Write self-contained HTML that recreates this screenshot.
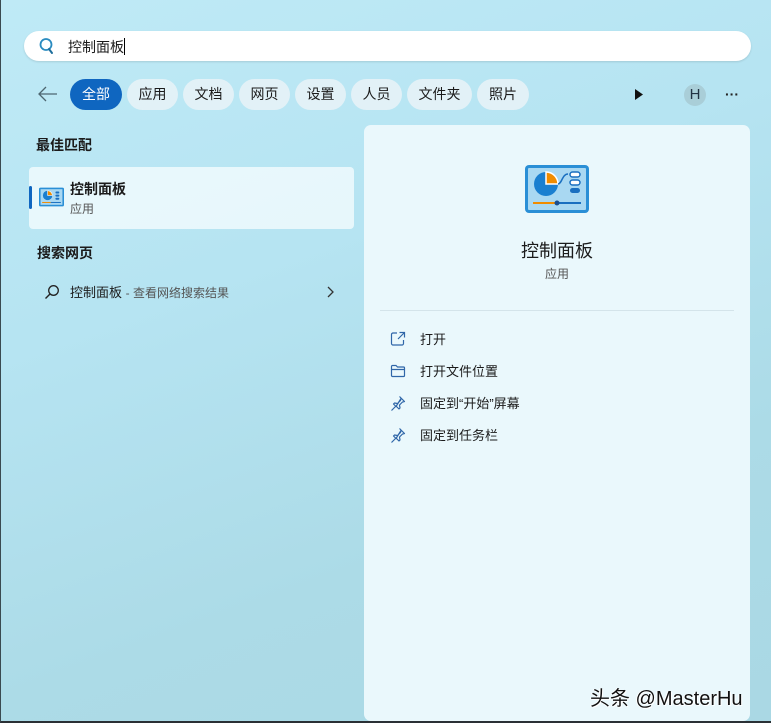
<!DOCTYPE html>
<html><head><meta charset="utf-8"><style>
*{margin:0;padding:0;box-sizing:border-box}
body{width:771px;height:723px;overflow:hidden;font-family:"Liberation Sans","Noto Sans CJK SC",sans-serif;color:#1b1b1b;position:relative;
background:linear-gradient(160deg,#bfeaf6 0%,#b6e4f2 35%,#acdbe7 70%,#aad8e4 100%);}
.frame{position:absolute;left:0;top:0;width:771px;height:723px;border-left:1px solid #3a4a50;border-bottom:2px solid #2a3035;pointer-events:none}
.search{position:absolute;left:24px;top:31px;width:727px;height:30px;background:#fff;border-radius:15px;box-shadow:0 1px 2px rgba(0,0,0,.12)}
.search .t{position:absolute;left:44px;top:6px;font-size:14px}
.search .cur{display:inline-block;width:1px;height:17px;background:#000;vertical-align:-3px}
.pill{position:absolute;top:79px;height:31px;border-radius:16px;background:rgba(236,244,247,.8);font-size:14px;line-height:31px;text-align:center}
.pill.on{background:#0f66c0;color:#fff}
.h{position:absolute;font-size:14px;font-weight:bold}
.card{position:absolute;left:29px;top:167px;width:325px;height:62px;background:rgba(240,250,253,.85);border-radius:4px}
.bar{position:absolute;left:29px;top:186px;width:3px;height:23px;background:#0f66c0;border-radius:2px}
.panel{position:absolute;left:364px;top:125px;width:386px;height:596px;background:#eaf8fc;border-radius:7px}
.act{position:absolute;left:56px;font-size:13px}
.ic{position:absolute;left:26px}
</style></head><body>
<div class="search">
<svg style="position:absolute;left:14px;top:6px" width="18" height="18" viewBox="0 0 18 18"><circle cx="8" cy="7.5" r="5.5" fill="none" stroke="#2a8bc0" stroke-width="1.8"/><path d="M11 12L14 16" stroke="#1e6e9c" stroke-width="2" stroke-linecap="round"/></svg>
<div class="t">控制面板<span class="cur"></span></div>
</div>
<svg style="position:absolute;left:38px;top:86px" width="20" height="16" viewBox="0 0 20 16"><path d="M19 8H2M8 1L1 8l7 7" fill="none" stroke="#4d6670" stroke-width="1.3"/></svg>
<div class="pill on" style="left:70px;width:52px">全部</div>
<div class="pill" style="left:127px;width:51px">应用</div>
<div class="pill" style="left:183px;width:51px">文档</div>
<div class="pill" style="left:239px;width:51px">网页</div>
<div class="pill" style="left:295px;width:51px">设置</div>
<div class="pill" style="left:351px;width:51px">人员</div>
<div class="pill" style="left:407px;width:65px">文件夹</div>
<div class="pill" style="left:477px;width:52px">照片</div>
<svg style="position:absolute;left:634px;top:88px" width="10" height="13"><path d="M1 1L9 6.5 1 12Z" fill="#111"/></svg>
<div style="position:absolute;left:684px;top:84px;width:22px;height:22px;border-radius:11px;background:#a9ced8;font-size:15px;text-align:center;line-height:22px;color:#234">H</div>
<div style="position:absolute;left:725px;top:86px;font-size:14px;font-weight:bold;color:#222">···</div>

<div class="h" style="left:36px;top:135px">最佳匹配</div>
<div class="card"></div><div class="bar"></div>
<svg style="position:absolute;left:39px;top:187px" width="25" height="20" viewBox="0 0 64 48"><rect x="0" y="0" width="64" height="48" rx="4" fill="#2a8fd6"/><rect x="4" y="4" width="56" height="40" fill="#a9d8f2"/><circle cx="22" cy="20" r="12" fill="#1a7fd0"/><path d="M22 8v12h12A12 12 0 0 0 22 8z" fill="#f08c00" stroke="#fff" stroke-width="1.5"/><rect x="42" y="10" width="10" height="5" rx="2.5" fill="#1a6fc0"/><rect x="42" y="18" width="10" height="5" rx="2.5" fill="#1a6fc0"/><rect x="42" y="26" width="10" height="5" rx="2.5" fill="#1a6fc0"/><path d="M8 38h22" stroke="#f08c00" stroke-width="2.5"/><path d="M30 38h26" stroke="#1a6fc0" stroke-width="2.5"/></svg>
<div style="position:absolute;left:70px;top:179px;font-size:14px;font-weight:bold">控制面板</div>
<div style="position:absolute;left:70px;top:200px;font-size:12px;color:#555">应用</div>
<div class="h" style="left:37px;top:243px">搜索网页</div>
<svg style="position:absolute;left:44px;top:284px" width="16" height="16" viewBox="0 0 16 16"><circle cx="9.5" cy="6.5" r="4.8" fill="none" stroke="#222" stroke-width="1.3"/><path d="M6 10L1.5 14.5" stroke="#222" stroke-width="1.4"/></svg>
<div style="position:absolute;left:70px;top:282px;font-size:13px">控制面板 <span style="color:#555;font-size:12px">- 查看网络搜索结果</span></div>
<svg style="position:absolute;left:326px;top:286px" width="8" height="12"><path d="M2 1l5 5-5 5" fill="none" stroke="#333" stroke-width="1.3"/></svg>

<div class="panel">
<svg style="position:absolute;left:161px;top:40px" width="64" height="48" viewBox="0 0 64 48"><rect x="0" y="0" width="64" height="48" rx="4" fill="#2a8fd6"/><rect x="3" y="3" width="58" height="42" rx="1" fill="#a9d8f2"/><circle cx="21" cy="19" r="12" fill="#1a7fd0"/><path d="M21 7v12h12A12 12 0 0 0 21 7z" fill="#f08c00" stroke="#fff" stroke-width="1.5"/><path d="M33 19c4 0 4-10 10-10" fill="none" stroke="#1a6fc0" stroke-width="1.5"/><rect x="45" y="7" width="10" height="5" rx="2.5" fill="#fff" stroke="#1a6fc0" stroke-width="1.5"/><rect x="45" y="15" width="10" height="5" rx="2.5" fill="#fff" stroke="#1a6fc0" stroke-width="1.5"/><rect x="45" y="23" width="10" height="5" rx="2.5" fill="#1a6fc0"/><path d="M8 38h24" stroke="#f08c00" stroke-width="2"/><path d="M32 38h24" stroke="#1a6fc0" stroke-width="2"/><circle cx="32" cy="38" r="2.5" fill="#1a4f90"/></svg>
<div style="position:absolute;left:0;width:386px;top:112px;text-align:center;font-size:18px">控制面板</div>
<div style="position:absolute;left:0;width:386px;top:140px;text-align:center;font-size:12px;color:#555">应用</div>
<div style="position:absolute;left:16px;top:185px;width:354px;height:1px;background:#d4e4ea"></div>
<svg class="ic" style="top:206px" width="16" height="16" viewBox="0 0 16 16"><path d="M7 2H3a1.5 1.5 0 0 0-1.5 1.5v9A1.5 1.5 0 0 0 3 14h9a1.5 1.5 0 0 0 1.5-1.5V9M9.5 1.5H14.5V6.5M14.5 1.5L8 8" fill="none" stroke="#2f66a8" stroke-width="1.2"/></svg>
<div class="act" style="top:204px">打开</div>
<svg class="ic" style="top:238px" width="16" height="16" viewBox="0 0 16 16"><path d="M1.5 3.5a1 1 0 0 1 1-1h3.5l1.5 1.5h6a1 1 0 0 1 1 1v7.5a1 1 0 0 1-1 1h-11a1 1 0 0 1-1-1zM1.5 6.5h13" fill="none" stroke="#2f66a8" stroke-width="1.2"/></svg>
<div class="act" style="top:236px">打开文件位置</div>
<svg class="ic" style="top:270px" width="16" height="16" viewBox="0 0 16 16"><path d="M9.5 1.5l5 5-2 .5-3 3 .5 3-1 1-3-3-4.5 4.5M6 11.5L3.5 9l1-1 3 .5 3-3 .5-2z" fill="none" stroke="#2f66a8" stroke-width="1.2" stroke-linejoin="round"/></svg>
<div class="act" style="top:268px">固定到“开始”屏幕</div>
<svg class="ic" style="top:302px" width="16" height="16" viewBox="0 0 16 16"><path d="M9.5 1.5l5 5-2 .5-3 3 .5 3-1 1-3-3-4.5 4.5M6 11.5L3.5 9l1-1 3 .5 3-3 .5-2z" fill="none" stroke="#2f66a8" stroke-width="1.2" stroke-linejoin="round"/></svg>
<div class="act" style="top:300px">固定到任务栏</div>
<div style="position:absolute;left:226px;top:557px;font-size:20px;color:#111;white-space:nowrap;text-shadow:1px 1px 0 #fff,-1px 0 0 #fff">头条 @MasterHu</div>
</div>
<div class="frame"></div>
</body></html>
